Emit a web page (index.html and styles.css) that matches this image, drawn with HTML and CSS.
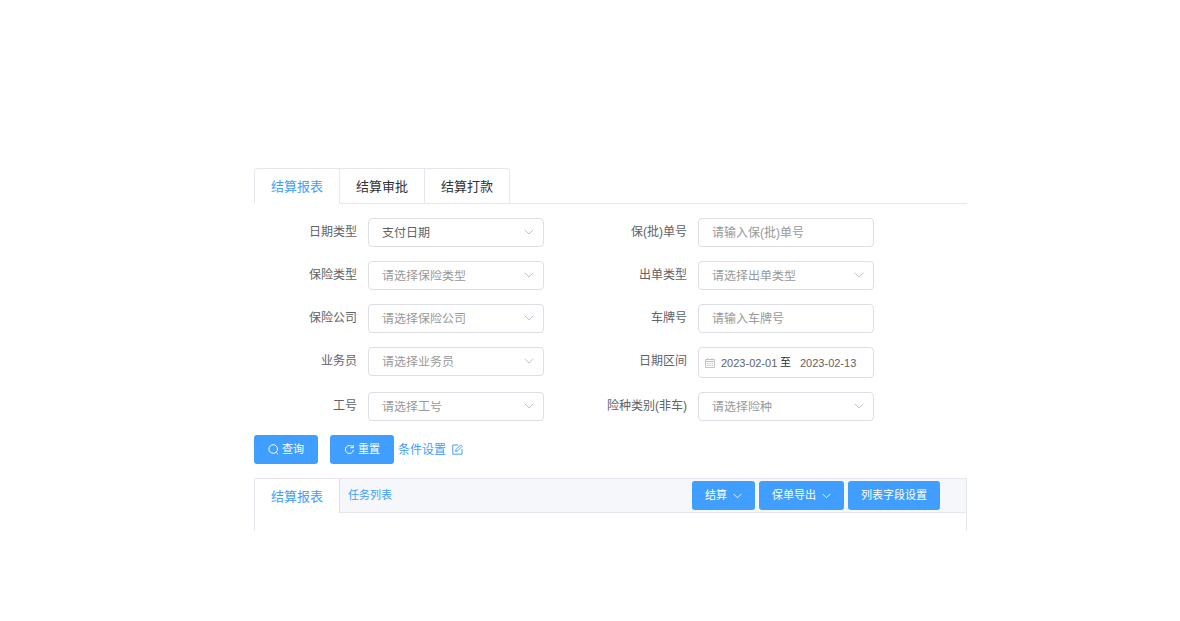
FILE: index.html
```html
<!DOCTYPE html>
<html lang="zh-CN">
<head>
<meta charset="utf-8">
<title>结算报表</title>
<link rel="stylesheet" href="styles.css">
</head>
<body>
<svg class="sprite" aria-hidden="true">
  <symbol id="chevron" viewBox="0 0 10 6"><path d="M.7.7 5 5 9.3.7"/></symbol>
</svg>
<main class="page">
  <nav class="tabs">
    <button class="tab tab-active" type="button">结算报表</button>
    <button class="tab" type="button">结算审批</button>
    <button class="tab" type="button">结算打款</button>
  </nav>

  <form class="filters">
    <div class="field">
      <label for="date-type">日期类型</label>
      <div class="control"><select id="date-type" class="box chosen"><option>支付日期</option></select><svg class="arrow"><use href="#chevron"/></svg></div>
    </div>
    <div class="field">
      <label for="policy-no">保(批)单号</label>
      <div class="control"><input id="policy-no" class="box" type="text" placeholder="请输入保(批)单号"></div>
    </div>
    <div class="field">
      <label for="ins-type">保险类型</label>
      <div class="control"><select id="ins-type" class="box"><option>请选择保险类型</option></select><svg class="arrow"><use href="#chevron"/></svg></div>
    </div>
    <div class="field">
      <label for="issue-type">出单类型</label>
      <div class="control"><select id="issue-type" class="box"><option>请选择出单类型</option></select><svg class="arrow"><use href="#chevron"/></svg></div>
    </div>
    <div class="field">
      <label for="company">保险公司</label>
      <div class="control"><select id="company" class="box"><option>请选择保险公司</option></select><svg class="arrow"><use href="#chevron"/></svg></div>
    </div>
    <div class="field">
      <label for="plate">车牌号</label>
      <div class="control"><input id="plate" class="box" type="text" placeholder="请输入车牌号"></div>
    </div>
    <div class="field">
      <label for="agent">业务员</label>
      <div class="control"><select id="agent" class="box"><option>请选择业务员</option></select><svg class="arrow"><use href="#chevron"/></svg></div>
    </div>
    <div class="field">
      <label for="date-from">日期区间</label>
      <div class="control range">
        <svg class="calendar" viewBox="0 0 10 10"><path d="M.5 1.5h9v8h-9zM.5 3.5h9M3 0v2.500M7 0v2.500M2 5.500h1.500M4.300 5.500h1.500M6.600 5.500h1.500M2 7.500h1.500M4.300 7.500h1.500M6.600 7.500h1.500"/></svg>
        <input id="date-from" class="date" type="text" value="2023-02-01">
        <span class="to">至</span>
        <input class="date" type="text" value="2023-02-13" aria-label="结束日期">
      </div>
    </div>
    <div class="field">
      <label for="job-no">工号</label>
      <div class="control"><select id="job-no" class="box"><option>请选择工号</option></select><svg class="arrow"><use href="#chevron"/></svg></div>
    </div>
    <div class="field">
      <label for="risk">险种类别(非车)</label>
      <div class="control"><select id="risk" class="box"><option>请选择险种</option></select><svg class="arrow"><use href="#chevron"/></svg></div>
    </div>
  </form>

  <div class="actions">
    <button class="btn btn-query" type="button"><svg class="icon" viewBox="0 0 11 11"><circle cx="5.200" cy="5" r="4.300"/><path d="m8 8.300 2 2"/></svg>查询</button>
    <button class="btn" type="button"><svg class="icon" viewBox="0 0 11 11"><path d="M8.700 3.200A4 4 0 1 0 9.400 6M9.200 1v2.700H6.500"/></svg>重置</button>
    <a class="settings" href="#">条件设置<svg class="icon" viewBox="0 0 11 11"><path d="M6 1H.8v9.200H10V5M3.600 7.400l.5-2L8.600.9l1.500 1.500-4.500 4.500z"/></svg></a>
  </div>

  <section class="panel">
    <header class="panel-head">
      <button class="panel-tab" type="button">结算报表</button>
      <a class="tasks" href="#">任务列表</a>
      <div class="tools">
        <button class="btn" type="button">结算<svg class="caret"><use href="#chevron"/></svg></button>
        <button class="btn" type="button">保单导出<svg class="caret"><use href="#chevron"/></svg></button>
        <button class="btn" type="button">列表字段设置</button>
      </div>
    </header>
    <div class="panel-body"></div>
  </section>
</main>
</body>
</html>
```
FILE: styles.css
```css
* { box-sizing: border-box; }
body {
  margin: 0;
  background: #fff;
  color: #606266;
  font: 12px/1 "Liberation Sans", "Noto Sans CJK SC", sans-serif;
}
button, input, select { margin: 0; font: inherit; color: inherit; }
a { color: #409eff; text-decoration: none; }
svg { fill: none; stroke: currentColor; flex: none; }
.sprite { display: none; }

.page { padding: 168px 213px 0 254px; }

.tabs { display: flex; height: 36px; border-bottom: 1px solid #e4e7ed; }
.tab {
  height: 36px;
  padding: 0 16px;
  border: 1px solid #e4e7ed;
  border-left: 0;
  background: #fff;
  color: #303133;
  font-size: 13px;
}
.tab:first-child { border-left: 1px solid #e4e7ed; border-top-left-radius: 4px; }
.tab:last-child { border-top-right-radius: 4px; }
.tab-active { border-bottom-color: #fff; color: #409eff; }

.filters {
  display: grid;
  grid-template-columns: 1fr 1fr;
  gap: 14px 0;
  padding: 14px 53px 0 0;
}
.field { display: flex; padding-right: 40px; }
.field label { width: 103px; line-height: 28px; text-align: right; white-space: nowrap; }
.control { position: relative; flex: 1; min-width: 0; margin-left: 11px; }
.box {
  display: block;
  width: 100%;
  height: 29px;
  padding: 0 13px;
  border: 1px solid #dcdfe6;
  border-radius: 4px;
  background: #fff;
  color: #999;
  appearance: none;
  outline: 0;
}
.box::placeholder { color: #999; }
.chosen { color: #606266; }
.arrow { position: absolute; right: 10px; top: 11px; width: 10px; height: 6px; color: #c0c4cc; pointer-events: none; }
.range {
  display: flex;
  align-items: center;
  height: 31px;
  padding: 0 6px;
  border: 1px solid #dcdfe6;
  border-radius: 4px;
  font-size: 11px;
}
.calendar { width: 10px; height: 10px; margin-right: 6px; color: #c0c4cc; }
.date { width: 59px; padding: 0; border: 0; background: none; outline: 0; }
.to { margin-right: 9px; color: #303133; }

.actions { display: flex; align-items: center; margin-top: 14px; }
.btn {
  display: inline-flex;
  align-items: center;
  height: 29px;
  padding: 0 14px;
  border: 0;
  border-radius: 3px;
  background: #409eff;
  color: #fff;
  font-size: 11px;
  white-space: nowrap;
}
.btn-query { margin-right: 12px; }
.icon { width: 11px; height: 11px; }
.btn .icon { margin-right: 3px; }
.settings { display: flex; align-items: center; margin-left: 4px; }
.settings .icon { margin-left: 6px; }

.panel { margin-top: 14px; border: 1px solid #e4e7ed; border-bottom: 0; }
.panel-head { display: flex; align-items: center; height: 34px; border-bottom: 1px solid #e4e7ed; background: #f5f7fa; }
.panel-tab {
  align-self: flex-start;
  flex: none;
  height: 34px;
  padding: 0 16px;
  border: 0;
  border-right: 1px solid #dcdfe6;
  background: #fff;
  color: #409eff;
  font-size: 13px;
}
.tasks { margin-left: 8px; font-size: 11px; }
.tools { display: flex; gap: 4px; margin: 0 26px 0 auto; }
.tools .btn { padding: 0 13px; }
.caret { width: 9px; height: 6px; margin-left: 6px; }
.panel-body { height: 18px; }
```
